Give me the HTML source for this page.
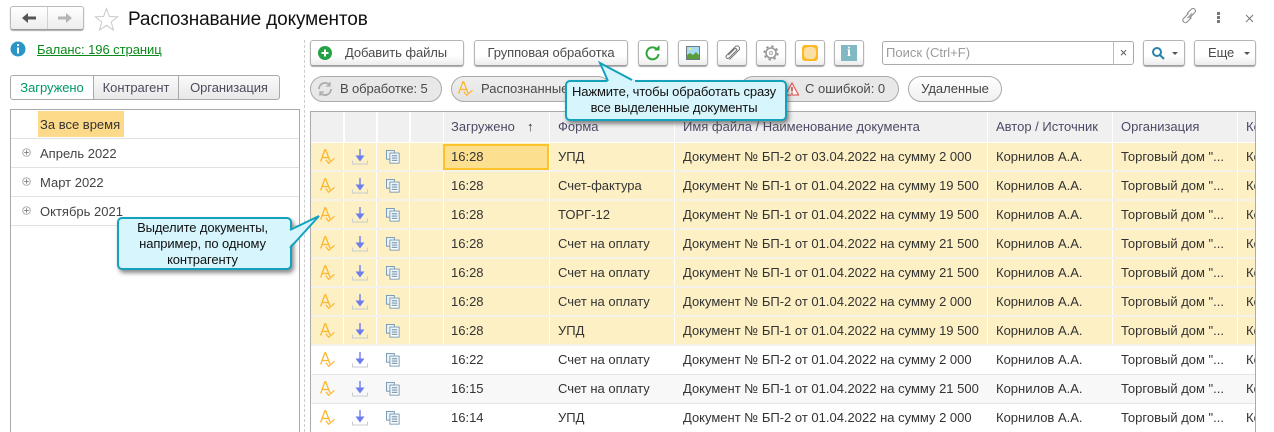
<!DOCTYPE html>
<html lang="ru"><head><meta charset="utf-8"><title>Распознавание документов</title>
<style>
html,body{margin:0;padding:0;background:#fff}
#p{position:relative;width:1274px;height:432px;overflow:hidden;background:#fff;font:13px/16px "Liberation Sans",sans-serif;color:#333}
#p *{box-sizing:border-box}
.a{position:absolute;white-space:nowrap}
.btn{position:absolute;height:26px;top:40px;border:1px solid #b5b5b5;border-bottom-color:#9a9a9a;border-radius:3px;background:linear-gradient(#fff,#fff 60%,#ececec);box-shadow:0 1px 1px #aaa;color:#4a4a4a;white-space:nowrap;line-height:24px;text-align:center;letter-spacing:-.08px}
.pill{position:absolute;top:76px;height:26px;border:1px solid #aaa;border-radius:13px;background:#e8e8e8;line-height:24px;color:#4a4a4a;white-space:nowrap}
.tab{position:absolute;top:75px;height:25px;border:1px solid #aaa;line-height:23px;text-align:center;color:#4e4a5e;background:linear-gradient(#fafafa,#e8e8e8);letter-spacing:-.05px}
.tr{position:absolute;left:0;right:0;height:29px}
.tr i{position:absolute;top:0;bottom:0;width:1px;background:#fff}
.lrow{position:absolute;left:11px;width:288px;height:29px;border-bottom:1px solid #e2e2e2;color:#444}
.grid{position:absolute;left:310px;top:111px;width:946px;height:321px;border:1px solid #aaa;border-width:1px 1px 0 1px;overflow:hidden;background:#fff}
.in{position:absolute;left:1px;top:0;right:0;bottom:0}
.th{position:absolute;top:0;height:30px;background:#f0f0f0;line-height:30px;color:#4e4a66;padding-left:8px;white-space:nowrap;overflow:hidden}
.c{position:absolute;top:0;line-height:28px;height:28px;white-space:nowrap}
.t{left:139px}.f{left:246px}.n{left:371px}.u{left:684px}.o{left:809px}.k{left:934px}
.y{background:#fdf0c4;border-bottom:2px solid #f4f2ea;box-shadow:-1px 0 0 #fdf0c4}
.w{background:#fff;border-bottom:1px solid #e4e4e4;box-shadow:-1px 0 0 #fff}
.g{background:#f8f8f8;border-bottom:1px solid #e4e4e4;box-shadow:-1px 0 0 #f8f8f8}
.s{position:absolute;left:0;top:0}
.call{position:absolute;background:#d6f5fd;border:2px solid #14a1bd;border-radius:5px;box-shadow:2px 3px 4px rgba(60,60,60,.6);color:#111;text-align:center;white-space:nowrap;letter-spacing:-.12px;padding-right:4px}
.tb{width:30px}
</style></head><body><div id="p">
<svg width="0" height="0" style="position:absolute"><defs>
<symbol id="ia" viewBox="0 0 15 16"><path d="M.6 12.500 4.900 .8h.7L10 12M2.300 8.500h6" fill="none" stroke="#fdb52b" stroke-width="1.300"/><path d="M5.800 10.800l2.800 3.500 5.900-5" fill="none" stroke="#fdb52b" stroke-width="1.200"/></symbol>
<symbol id="id" viewBox="0 0 16 16"><path d="M.5 11.500v3.500h15v-3.500" fill="none" stroke="#c9cdd1" stroke-width="1"/><path d="M8 0v7" stroke="#6d7df0" stroke-width="1.400"/><path d="M3.500 6.500h9L8 12.500z" fill="#6d7df0"/></symbol>
<symbol id="ic" viewBox="0 0 16 16"><rect x=".5" y=".5" width="9" height="10" fill="#eaf2f8" stroke="#6f92ae"/><rect x="4.500" y="3.500" width="10.500" height="11.500" fill="#fff" stroke="#6f92ae"/><path d="M6.500 6h6.500M6.500 8h6.500M6.500 10h6.500M6.500 12h6.500" stroke="#6f92ae"/></symbol>
<symbol id="ip" viewBox="0 0 9 9"><circle cx="4.500" cy="4.500" r="3.800" fill="#fff" stroke="#aaa"/><path d="M2.200 4.500h4.600M4.500 2.200v4.600" stroke="#888"/></symbol>
</defs></svg>

<div class="a" style="left:10px;top:6px;width:74px;height:24px;border:1px solid #bbb;border-bottom-color:#999;border-radius:3px;background:linear-gradient(#fff,#ededed);box-shadow:0 1px 1px #aaa"></div>
<div class="a" style="left:47px;top:7px;width:1px;height:22px;background:#d0d0d0"></div>
<svg class="a" style="left:21px;top:12px" width="16" height="12"><path d="M1 6l6-5v3.500h8v3H7V11z" fill="#555"/></svg>
<svg class="a" style="left:57px;top:12px" width="16" height="12"><path d="M15 6L9 1v3.500H1v3h8V11z" fill="#b5b5b5"/></svg>
<svg class="a" style="left:94px;top:7px" width="25" height="24"><path d="M12.500 1.500 15.400 9.500 23.700 9.800 17.200 15 19.400 23 12.500 18.400 5.600 23 7.800 15 1.300 9.800 9.600 9.500z" fill="#fff" stroke="#c9c9c9"/></svg>
<div class="a" style="left:128px;top:7px;font-size:19px;line-height:26px;color:#111;letter-spacing:-.125px">Распознавание документов</div>

<svg class="a" style="left:1181px;top:7px" width="18" height="18" fill="none" stroke="#888"><path d="M7.500 6.500 2.500 11.500c-2 2.500 1.500 5.500 3.500 3.500L10.500 10.500M8.500 11 13.800 5.500c2-2.200-1.300-5.500-3.300-3.500L6 6.500"/><path d="M6.500 11.200 11 6.500"/></svg>
<div class="a" style="left:1217px;top:12px;width:3px;height:3px;background:#777;box-shadow:0 4px 0 #777,0 8px 0 #777"></div>
<svg class="a" style="left:1245px;top:14px" width="9" height="9" stroke="#777"><path d="M1 1l7 7M8 1 1 8"/></svg>

<svg class="a" style="left:10px;top:41px" width="16" height="16"><circle cx="8" cy="8" r="7.500" fill="#2b95c6"/><rect x="7" y="3" width="2" height="2" fill="#fff"/><rect x="7" y="6.500" width="2" height="6" fill="#fff"/></svg>
<div class="a" style="left:37px;top:42px;color:#0a8a1c;text-decoration:underline;letter-spacing:-.05px">Баланс: 196 страниц</div>

<div class="tab" style="left:10px;width:84px;border-radius:3px 0 0 3px;background:#fff;color:#00996b">Загружено</div>
<div class="tab" style="left:93px;width:86px;border-left:1px solid #aaa">Контрагент</div>
<div class="tab" style="left:178px;width:102px;border-radius:0 3px 3px 0">Организация</div>

<div class="a" style="left:10px;top:109px;width:290px;height:323px;border:1px solid #aaa;border-width:1px 1px 0 1px"></div>
<div class="lrow" style="top:110px"></div>
<div class="a" style="left:38px;top:111px;width:86px;height:26px;background:#fdda8a;line-height:28px;padding-left:2px;color:#333">За все время</div>
<div class="lrow" style="top:139px;line-height:30px;padding-left:29px">Апрель 2022</div>
<div class="lrow" style="top:168px;line-height:30px;padding-left:29px">Март 2022</div>
<div class="lrow" style="top:197px;line-height:30px;padding-left:29px">Октябрь 2021</div>
<svg class="a" style="left:22px;top:148px" width="9" height="9"><use href="#ip"/></svg>
<svg class="a" style="left:22px;top:177px" width="9" height="9"><use href="#ip"/></svg>
<svg class="a" style="left:22px;top:206px" width="9" height="9"><use href="#ip"/></svg>

<div class="a" style="left:304px;top:40px;height:392px;border-left:1px dashed #ccc"></div>

<div class="btn" style="left:310px;width:154px;text-align:left;padding-left:34px">Добавить файлы</div>
<svg class="a" style="left:318px;top:46px" width="14" height="14"><circle cx="7" cy="7" r="7" fill="#25a244"/><path d="M3.500 7h7M7 3.500v7" stroke="#fff" stroke-width="2"/></svg>
<div class="btn" style="left:474px;width:154px">Групповая обработка</div>
<div class="btn tb" style="left:638px"></div>
<svg class="a" style="left:645px;top:45px" width="16" height="16" fill="none"><path d="M13.500 9a6 6 0 1 1-1.800-5" stroke="#2ea53a" stroke-width="2"/><path d="M9 5.500h5.500V0z" fill="#2ea53a"/></svg>
<div class="btn tb" style="left:678px"></div>
<svg class="a" style="left:686px;top:46px" width="14" height="14"><rect width="14" height="14" fill="#6a7a86"/><rect x="1" y="1" width="12" height="12" fill="#a8dcf0"/><path d="M1 13V9l3-2 3 2 3-3 3 3v4z" fill="#5b9c3c"/><rect x="3" y="2" width="2" height="2" fill="#ffe76a"/></svg>
<div class="btn tb" style="left:717px"></div>
<svg class="a" style="left:724px;top:44px" width="17" height="17" fill="none" stroke="#777" stroke-width="1"><path d="M5.500 15.500 15 6c2-2.200-1.300-5.500-3.500-3.500L2.500 11.500c-1.500 1.800 1 4 2.500 2.500L12.500 6.500c1-1.200-.6-2.700-1.800-1.700L4.500 11"/></svg>
<div class="btn tb" style="left:756px"></div>
<svg class="a" style="left:763px;top:45px" width="16" height="16" fill="none"><circle cx="8" cy="8" r="5" stroke="#999" stroke-width="1.600"/><circle cx="8" cy="8" r="6.700" stroke="#999" stroke-width="1.800" stroke-dasharray="2.500 2.760"/><circle cx="8" cy="8" r="1.500" stroke="#aaa"/></svg>
<div class="btn tb" style="left:795px"></div>
<div class="a" style="left:802px;top:45px;width:16px;height:16px;border-radius:3px;background:#ffb926"></div>
<div class="a" style="left:804px;top:47px;width:12px;height:12px;border-radius:4px;background:#fbe0a6"></div>
<div class="btn tb" style="left:834px"></div>
<div class="a" style="left:841px;top:45px;width:16px;height:16px;background:#82b8c4;color:#fff;font:bold 14px/16px 'Liberation Serif',serif;text-align:center">i</div>

<div class="a" style="left:882px;top:41px;width:232px;height:24px;border:1px solid #aaa;border-radius:3px 0 0 3px;line-height:22px;padding-left:3px;color:#9b9b9b">Поиск (Ctrl+F)</div>
<div class="a" style="left:1113px;top:41px;width:21px;height:24px;border:1px solid #aaa;border-left-color:#bbb;border-radius:0 3px 3px 0;line-height:21px;text-align:center;color:#555">×</div>
<div class="btn" style="left:1143px;width:42px"></div>
<svg class="a" style="left:1151px;top:46px" width="14" height="14" fill="none" stroke="#2a83a8" stroke-width="2"><circle cx="6" cy="6" r="4"/><path d="M9 9l4 4"/></svg>
<div class="a" style="left:1172px;top:52px;border:3px solid transparent;border-top-color:#555;border-bottom:0"></div>
<div class="btn" style="left:1194px;width:62px;text-align:left;padding-left:13px">Еще</div>
<div class="a" style="left:1244px;top:52px;border:3px solid transparent;border-top-color:#555;border-bottom:0"></div>

<div class="pill" style="left:310px;width:132px;padding-left:29px;letter-spacing:-.12px">В обработке: 5</div>
<svg class="a" style="left:317px;top:81px" width="16" height="16" fill="none" stroke="#aaa" stroke-width="1.800"><path d="M2 8a6 6 0 0 1 10.500-4M14 8a6 6 0 0 1-10.500 4"/><path d="M13 1v4H9M3 15v-4h4" stroke-width="1.200"/></svg>
<div class="pill" style="left:451px;width:160px;padding-left:29px;background:linear-gradient(#efefef,#e3e3e3)">Распознанные</div>
<svg class="a" style="left:458px;top:81px" width="15" height="16"><use href="#ia"/></svg>
<div class="pill" style="left:740px;width:159px;padding-left:64px">С ошибкой: 0</div>
<svg class="a" style="left:785px;top:82px" width="14" height="14"><path d="M7 1 13.500 13h-13z" fill="#fff" stroke="#e8605a" stroke-width="1.300"/><path d="M7 5v4.500M7 10.500v1.500" stroke="#c33" stroke-width="1.400"/></svg>
<div class="pill" style="left:908px;width:94px;background:linear-gradient(#fff,#f0f0f0);text-align:center;color:#444">Удаленные</div>

<div class="grid"><div class="in">
<div class="th" style="left:-1px;width:32px"></div><div class="th" style="left:33px;width:31px"></div><div class="th" style="left:66px;width:31px"></div><div class="th" style="left:99px;width:32px"></div>
<div class="th" style="left:132px;width:105px;padding-left:7px">Загружено</div>
<div class="a" style="left:215px;top:7px;color:#333">↑</div>
<div class="th" style="left:238px;width:124px">Форма</div>
<div class="th" style="left:363px;width:312px">Имя файла / Наименование документа</div>
<div class="th" style="left:676px;width:124px">Автор / Источник</div>
<div class="th" style="left:801px;width:124px">Организация</div>
<div class="th" style="left:926px;width:21px">Контрагент</div>

<div class="tr y" style="top:31px"><i style="left:31px"></i><i style="left:64px"></i><i style="left:97px"></i><i style="left:131px"></i><i style="left:237px"></i><i style="left:362px"></i><i style="left:675px"></i><i style="left:800px"></i><i style="left:925px"></i><svg class="s" style="left:8px;top:6px" width="15" height="16"><use href="#ia"/></svg><svg class="s" style="left:40px;top:6px" width="16" height="16"><use href="#id"/></svg><svg class="s" style="left:74px;top:7px" width="14" height="14"><use href="#ic"/></svg><div class="a" style="left:131px;top:1px;width:106px;height:26px;background:#fde08f;border:2px solid #fcc32a"></div><span class="c t">16:28</span><span class="c f">УПД</span><span class="c n">Документ № БП-2 от 03.04.2022 на сумму 2 000</span><span class="c u">Корнилов А.А.</span><span class="c o">Торговый дом "...</span><span class="c k">Контрагент</span></div>
<div class="tr y" style="top:60px"><i style="left:31px"></i><i style="left:64px"></i><i style="left:97px"></i><i style="left:131px"></i><i style="left:237px"></i><i style="left:362px"></i><i style="left:675px"></i><i style="left:800px"></i><i style="left:925px"></i><svg class="s" style="left:8px;top:6px" width="15" height="16"><use href="#ia"/></svg><svg class="s" style="left:40px;top:6px" width="16" height="16"><use href="#id"/></svg><svg class="s" style="left:74px;top:7px" width="14" height="14"><use href="#ic"/></svg><span class="c t">16:28</span><span class="c f">Счет-фактура</span><span class="c n">Документ № БП-1 от 01.04.2022 на сумму 19 500</span><span class="c u">Корнилов А.А.</span><span class="c o">Торговый дом "...</span><span class="c k">Контрагент</span></div>
<div class="tr y" style="top:89px"><i style="left:31px"></i><i style="left:64px"></i><i style="left:97px"></i><i style="left:131px"></i><i style="left:237px"></i><i style="left:362px"></i><i style="left:675px"></i><i style="left:800px"></i><i style="left:925px"></i><svg class="s" style="left:8px;top:6px" width="15" height="16"><use href="#ia"/></svg><svg class="s" style="left:40px;top:6px" width="16" height="16"><use href="#id"/></svg><svg class="s" style="left:74px;top:7px" width="14" height="14"><use href="#ic"/></svg><span class="c t">16:28</span><span class="c f">ТОРГ-12</span><span class="c n">Документ № БП-1 от 01.04.2022 на сумму 19 500</span><span class="c u">Корнилов А.А.</span><span class="c o">Торговый дом "...</span><span class="c k">Контрагент</span></div>
<div class="tr y" style="top:118px"><i style="left:31px"></i><i style="left:64px"></i><i style="left:97px"></i><i style="left:131px"></i><i style="left:237px"></i><i style="left:362px"></i><i style="left:675px"></i><i style="left:800px"></i><i style="left:925px"></i><svg class="s" style="left:8px;top:6px" width="15" height="16"><use href="#ia"/></svg><svg class="s" style="left:40px;top:6px" width="16" height="16"><use href="#id"/></svg><svg class="s" style="left:74px;top:7px" width="14" height="14"><use href="#ic"/></svg><span class="c t">16:28</span><span class="c f">Счет на оплату</span><span class="c n">Документ № БП-1 от 01.04.2022 на сумму 21 500</span><span class="c u">Корнилов А.А.</span><span class="c o">Торговый дом "...</span><span class="c k">Контрагент</span></div>
<div class="tr y" style="top:147px"><i style="left:31px"></i><i style="left:64px"></i><i style="left:97px"></i><i style="left:131px"></i><i style="left:237px"></i><i style="left:362px"></i><i style="left:675px"></i><i style="left:800px"></i><i style="left:925px"></i><svg class="s" style="left:8px;top:6px" width="15" height="16"><use href="#ia"/></svg><svg class="s" style="left:40px;top:6px" width="16" height="16"><use href="#id"/></svg><svg class="s" style="left:74px;top:7px" width="14" height="14"><use href="#ic"/></svg><span class="c t">16:28</span><span class="c f">Счет на оплату</span><span class="c n">Документ № БП-1 от 01.04.2022 на сумму 21 500</span><span class="c u">Корнилов А.А.</span><span class="c o">Торговый дом "...</span><span class="c k">Контрагент</span></div>
<div class="tr y" style="top:176px"><i style="left:31px"></i><i style="left:64px"></i><i style="left:97px"></i><i style="left:131px"></i><i style="left:237px"></i><i style="left:362px"></i><i style="left:675px"></i><i style="left:800px"></i><i style="left:925px"></i><svg class="s" style="left:8px;top:6px" width="15" height="16"><use href="#ia"/></svg><svg class="s" style="left:40px;top:6px" width="16" height="16"><use href="#id"/></svg><svg class="s" style="left:74px;top:7px" width="14" height="14"><use href="#ic"/></svg><span class="c t">16:28</span><span class="c f">Счет на оплату</span><span class="c n">Документ № БП-2 от 01.04.2022 на сумму 2 000</span><span class="c u">Корнилов А.А.</span><span class="c o">Торговый дом "...</span><span class="c k">Контрагент</span></div>
<div class="tr y" style="top:205px"><i style="left:31px"></i><i style="left:64px"></i><i style="left:97px"></i><i style="left:131px"></i><i style="left:237px"></i><i style="left:362px"></i><i style="left:675px"></i><i style="left:800px"></i><i style="left:925px"></i><svg class="s" style="left:8px;top:6px" width="15" height="16"><use href="#ia"/></svg><svg class="s" style="left:40px;top:6px" width="16" height="16"><use href="#id"/></svg><svg class="s" style="left:74px;top:7px" width="14" height="14"><use href="#ic"/></svg><span class="c t">16:28</span><span class="c f">УПД</span><span class="c n">Документ № БП-1 от 01.04.2022 на сумму 19 500</span><span class="c u">Корнилов А.А.</span><span class="c o">Торговый дом "...</span><span class="c k">Контрагент</span></div>
<div class="tr w" style="top:234px"><svg class="s" style="left:8px;top:6px" width="15" height="16"><use href="#ia"/></svg><svg class="s" style="left:40px;top:6px" width="16" height="16"><use href="#id"/></svg><svg class="s" style="left:74px;top:7px" width="14" height="14"><use href="#ic"/></svg><span class="c t">16:22</span><span class="c f">Счет на оплату</span><span class="c n">Документ № БП-2 от 01.04.2022 на сумму 2 000</span><span class="c u">Корнилов А.А.</span><span class="c o">Торговый дом "...</span><span class="c k">Контрагент</span></div>
<div class="tr g" style="top:263px"><svg class="s" style="left:8px;top:6px" width="15" height="16"><use href="#ia"/></svg><svg class="s" style="left:40px;top:6px" width="16" height="16"><use href="#id"/></svg><svg class="s" style="left:74px;top:7px" width="14" height="14"><use href="#ic"/></svg><span class="c t">16:15</span><span class="c f">Счет на оплату</span><span class="c n">Документ № БП-1 от 01.04.2022 на сумму 21 500</span><span class="c u">Корнилов А.А.</span><span class="c o">Торговый дом "...</span><span class="c k">Контрагент</span></div>
<div class="tr w" style="top:292px"><svg class="s" style="left:8px;top:6px" width="15" height="16"><use href="#ia"/></svg><svg class="s" style="left:40px;top:6px" width="16" height="16"><use href="#id"/></svg><svg class="s" style="left:74px;top:7px" width="14" height="14"><use href="#ic"/></svg><span class="c t">16:14</span><span class="c f">УПД</span><span class="c n">Документ № БП-2 от 01.04.2022 на сумму 2 000</span><span class="c u">Корнилов А.А.</span><span class="c o">Торговый дом "...</span><span class="c k">Контрагент</span></div>
</div></div>

<div class="call" style="left:565px;top:80px;width:222px;height:41px;padding-top:2px;line-height:16px">Нажмите, чтобы обработать сразу<br>все выделенные документы</div>
<svg class="a" style="left:590px;top:60px" width="50" height="26"><path d="M18 23 10 3 45 20 45 23z" fill="#d6f5fd"/><path d="M18 21 10 3 42 20" fill="none" stroke="#14a1bd" stroke-width="2"/></svg>

<div class="call" style="left:117px;top:217px;width:175px;height:53px;line-height:16px;padding-top:1px">Выделите документы,<br>например, по одному<br>контрагенту</div>
<svg class="a" style="left:288px;top:214px" width="34" height="36"><path d="M0 17 31 2 0 34z" fill="#d6f5fd"/><path d="M2 16 31 2 2 34" fill="none" stroke="#14a1bd" stroke-width="2"/></svg>
</div></body></html>
